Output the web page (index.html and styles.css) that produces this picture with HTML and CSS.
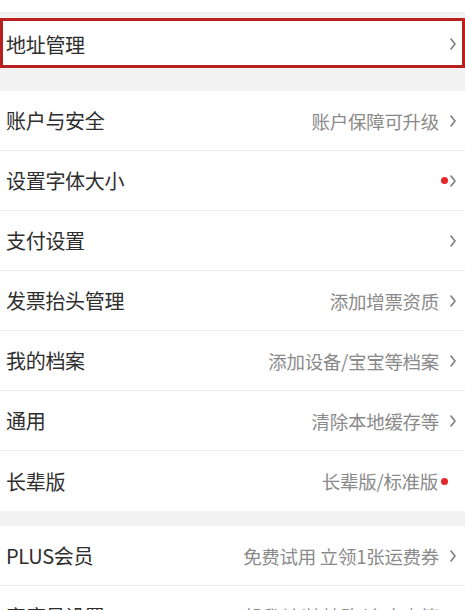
FILE: index.html
```html
<!DOCTYPE html>
<html lang="zh-CN">
<head>
<meta charset="utf-8">
<title>设置</title>
<link rel="stylesheet" href="styles.css">
</head>
<body>
<div class="page">
  <div class="top-strip"></div>
  <div class="row row-address">
    <span class="label">地址管理</span>
    <span class="extra">
      <svg class="chev" viewBox="0 0 6 12" width="6" height="12"><polyline points="1,1 5,6 1,11"/></svg>
    </span>
  </div>

  <div class="group group-first">
    <div class="row">
      <span class="label">账户与安全</span>
      <span class="extra"><span class="hint">账户保障可升级</span><svg class="chev" viewBox="0 0 6 12" width="6" height="12"><polyline points="1,1 5,6 1,11"/></svg></span>
    </div>
    <div class="row">
      <span class="label">设置字体大小</span>
      <span class="extra"><span class="dot"></span><svg class="chev tight" viewBox="0 0 6 12" width="6" height="12"><polyline points="1,1 5,6 1,11"/></svg></span>
    </div>
    <div class="row">
      <span class="label">支付设置</span>
      <span class="extra"><svg class="chev" viewBox="0 0 6 12" width="6" height="12"><polyline points="1,1 5,6 1,11"/></svg></span>
    </div>
    <div class="row">
      <span class="label">发票抬头管理</span>
      <span class="extra"><span class="hint">添加增票资质</span><svg class="chev" viewBox="0 0 6 12" width="6" height="12"><polyline points="1,1 5,6 1,11"/></svg></span>
    </div>
    <div class="row">
      <span class="label">我的档案</span>
      <span class="extra"><span class="hint">添加设备/宝宝等档案</span><svg class="chev" viewBox="0 0 6 12" width="6" height="12"><polyline points="1,1 5,6 1,11"/></svg></span>
    </div>
    <div class="row">
      <span class="label">通用</span>
      <span class="extra"><span class="hint">清除本地缓存等</span><svg class="chev" viewBox="0 0 6 12" width="6" height="12"><polyline points="1,1 5,6 1,11"/></svg></span>
    </div>
    <div class="row row-elder">
      <span class="label">长辈版</span>
      <span class="extra"><span class="hint">长辈版/标准版</span><span class="dot dot-after"></span></span>
    </div>
  </div>

  <div class="group group-second">
    <div class="row">
      <span class="label">PLUS会员</span>
      <span class="extra"><span class="hint">免费试用 立领1张运费券</span><svg class="chev" viewBox="0 0 6 12" width="6" height="12"><polyline points="1,1 5,6 1,11"/></svg></span>
    </div>
    <div class="row">
      <span class="label">家庭号设置</span>
      <span class="extra"><span class="hint">帮我付/快捷购/亲密卡等</span><svg class="chev" viewBox="0 0 6 12" width="6" height="12"><polyline points="1,1 5,6 1,11"/></svg></span>
    </div>
  </div>
</div>
</body>
</html>
```

FILE: styles.css
```css
html, body {
  margin: 0;
  padding: 0;
}

body {
  background: #f2f2f2;
  font-family: "Noto Sans CJK SC", "Noto Sans", sans-serif;
  color: #333333;
  overflow: hidden;
}

.page {
  width: 465px;
}

.top-strip {
  height: 12px;
  background: #ffffff;
  border-bottom: 1px solid #ececec;
  margin-bottom: 5px;
}

.row {
  display: flex;
  align-items: center;
  justify-content: space-between;
  height: 60px;
  box-sizing: border-box;
  padding: 0 9px 0 6px;
  background: #ffffff;
  border-bottom: 1px solid #ededed;
}

.row:last-child {
  border-bottom: none;
}

.row-address {
  height: 50px;
  border: 3px solid #b8201f;
  padding: 2px 6px 0 3px;
}

.label {
  font-size: 20px;
  letter-spacing: -0.3px;
  color: #2e2e2e;
}

.extra {
  display: flex;
  align-items: center;
}

.hint {
  font-size: 18.5px;
  color: #8a8a8a;
  letter-spacing: -0.3px;
}

.chev {
  display: block;
  margin-left: 11px;
  fill: none;
  stroke: #7d7d7d;
  stroke-width: 1.6;
  stroke-linecap: round;
  stroke-linejoin: round;
}

.chev.tight {
  margin-left: 2px;
}

.dot {
  display: block;
  width: 7px;
  height: 7px;
  border-radius: 50%;
  background: #e5262b;
}

.dot-after {
  margin-left: 3px;
  margin-right: 8px;
}

.group-first {
  margin-top: 23px;
}

.group-second {
  margin-top: 15px;
}
```
